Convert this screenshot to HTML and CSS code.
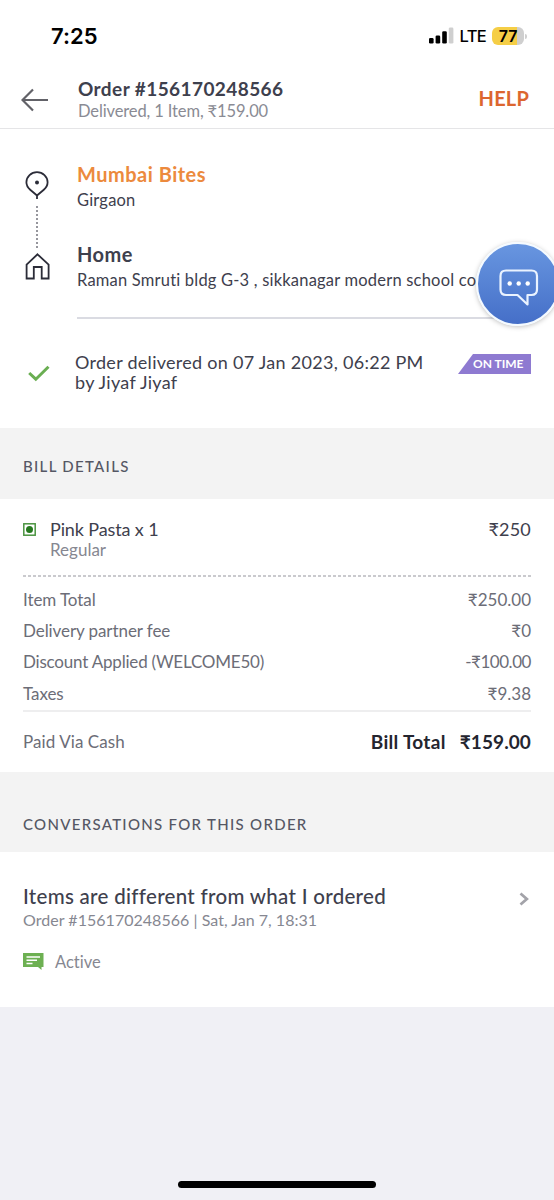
FILE: index.html
```html
<!DOCTYPE html>
<html lang="en">
<head>
<meta charset="utf-8">
<title>Order details</title>
<link rel="stylesheet" href="styles.css">
</head>
<body>
<div class="screen">
  <div class="status">
    <span class="clock">7:25</span>
    <div class="status-right">
      <svg class="signal" width="25" height="17" viewBox="0 0 25 17"><rect x="0" y="11" width="4.6" height="5.5" rx="1.3"/><rect x="6.6" y="8.500" width="4.6" height="8" rx="1.3"/><rect x="13.2" y="4.3" width="4.6" height="12.2" rx="1.3"/><rect x="19.8" y="0.5" width="4.6" height="16" rx="1.3" fill="#cfcfcf"/></svg>
      <span class="lte">LTE</span>
      <span class="battery"><span>77</span></span><span class="battery-tip"></span>
    </div>
  </div>
  <header class="header">
    <svg class="back" width="28" height="24" viewBox="0 0 28 24"><path d="M12 1.5 1.5 12 12 22.5M1.5 12H27" fill="none" stroke="#626268" stroke-width="2.2"/></svg>
    <div class="header-text">
      <h1 class="order-no">Order #156170248566</h1>
      <p class="order-sub">Delivered, 1 Item, ₹159.00</p>
    </div>
    <span class="help">HELP</span>
  </header>

  <section class="route">
    <div class="track">
      <svg class="pin" width="24" height="29" viewBox="0 0 24 29"><path d="M12 24.5 5.2 18.8C3 16.9 1.4 14.5 1.4 11.3A10.6 10.2 0 0 1 12 1.2 10.6 10.2 0 0 1 22.6 11.3C22.6 14.5 21 16.9 18.8 18.8ZM12 24V28" fill="none" stroke="#2b2c38" stroke-width="1.8"/><circle cx="12" cy="11.5" r="2" fill="#2b2c38"/></svg>
      <span class="dots"></span>
      <svg class="house" width="25" height="27" viewBox="0 0 25 27"><path d="M12.5 1.3 23.6 11.6V25.5H16.7V14H8.8V25.5H1.6V11.6Z" fill="none" stroke="#2b2c38" stroke-width="1.8"/></svg>
    </div>
    <div class="stops">
      <h2 class="place place-from">Mumbai Bites</h2>
      <p class="address">Girgaon</p>
      <h2 class="place place-home">Home</h2>
      <p class="address address-home">Raman Smruti bldg G-3 , sikkanagar modern school co</p>
    </div>
    <div class="chat">
      <svg width="40" height="38" viewBox="0 0 40 38"><path d="M7 1.5H32.500Q38 1.500 38 7V20.500Q38 26 32.500 26H28.500V35.500L18.500 26H7Q1.500 26 1.500 20.500V7Q1.500 1.500 7 1.500Z" fill="none" stroke="#eaf3ff" stroke-width="2.200" stroke-linejoin="round"/><g fill="#fff"><circle cx="10.700" cy="14.500" r="2.200"/><circle cx="19.700" cy="14.500" r="2.200"/><circle cx="28.700" cy="14.500" r="2.200"/></g></svg>
    </div>
  </section>
  <section class="delivered">
    <svg class="check" width="22" height="17" viewBox="0 0 22 17"><path d="M1.200 8 7.800 14.200 20.500 1.800" fill="none" stroke="#6aae52" stroke-width="3"/></svg>
    <p class="delivered-text">Order delivered on 07 Jan 2023, 06:22 PM<br>by Jiyaf Jiyaf</p>
    <span class="badge">ON TIME</span>
  </section>

  <h3 class="band band-bill">BILL DETAILS</h3>
  <section class="bill">
    <div class="item">
      <svg class="veg" width="13" height="13" viewBox="0 0 13 13"><rect x=".8" y=".8" width="11.4" height="11.4" fill="#fff" stroke="#4b9440" stroke-width="1.500"/><circle cx="6.500" cy="6.500" r="3.500" fill="#26791f"/></svg>
      <div class="item-text"><p class="item-name">Pink Pasta x 1</p><p class="item-size">Regular</p></div>
      <span class="item-price">₹250</span>
    </div>
    <div class="dash"></div>
    <div class="row"><span>Item Total</span><span class="amount">₹250.00</span></div>
    <div class="row"><span>Delivery partner fee</span><span class="amount">₹0</span></div>
    <div class="row"><span class="coupon">Discount Applied (WELCOME50)</span><span class="amount discount">-₹100.00</span></div>
    <div class="row"><span>Taxes</span><span class="amount">₹9.38</span></div>
    <div class="total"><span class="paid">Paid Via Cash</span><span class="total-label">Bill Total</span><span class="total-sum">₹159.00</span></div>
  </section>

  <h3 class="band band-conv">CONVERSATIONS FOR THIS ORDER</h3>
  <section class="conv">
    <div class="conv-head">
      <h4 class="conv-title">Items are different from what I ordered</h4>
      <svg class="chevron" width="10" height="14" viewBox="0 0 10 14"><path d="M1.500 1.500 7.800 7 1.500 12.500" fill="none" stroke="#a3a3a9" stroke-width="2.800"/></svg>
    </div>
    <p class="conv-sub">Order #156170248566 | Sat, Jan 7, 18:31</p>
    <div class="active">
      <svg width="21" height="18" viewBox="0 0 21 18"><path d="M0 0H20.500V14H18.500V17L15 14H0Z" fill="#6db052"/><path d="M3.500 4H17M3.500 7.300H14M3.500 10.500H9.500" stroke="#fff" stroke-width="1.400"/></svg>
      <span class="active-label">Active</span>
    </div>
  </section>
  <div class="home-bar"></div>
</div>
</body>
</html>
```

FILE: styles.css
```css
* { box-sizing: border-box; }
body { margin: 0; background: #f0f0f5; }
h1, h2, h3, h4, p { margin: 0; font-weight: 400; }
svg { display: block; flex: none; }
.screen { width: 554px; height: 1200px; overflow: hidden; display: flex; flex-direction: column; font-family: Lato, "Noto Sans", sans-serif; font-variant-ligatures: none; white-space: nowrap; background: #f0f0f5; color: #3e404d; }
.status { height: 72px; flex: none; background: #fff; display: flex; justify-content: space-between; padding: 24px 27px 0 51px; font-family: Inter, sans-serif; color: #000; }
.clock { font-size: 22px; line-height: 24px; font-weight: 600; }
.status-right { display: flex; height: 24px; align-items: center; }
.signal { margin-top: -1px; }
.lte { font-size: 16.5px; font-weight: 500; margin: 0 6px 0 6px; letter-spacing: -.7px; }
.battery { width: 32px; height: 18px; border-radius: 6px; margin-top: -1px; background: linear-gradient(90deg, #f5ce46 77%, #cfcfcf 77%); font-size: 16px; font-weight: 600; line-height: 18px; text-align: center; }
.battery-tip { width: 2px; height: 5px; margin-left: 1px; border-radius: 0 2px 2px 0; background: #cfcfcf; }
.header { height: 57px; flex: none; background: #fff; border-bottom: 1px solid #e5e5e7; display: flex; padding: 0 25px 0 21px; }
.back { margin-top: 16px; }
.header-text { margin-left: 29px; padding-top: 5px; flex: 1; }
.order-no { font-size: 19px; line-height: 23px; font-weight: 700; letter-spacing: .42px; }
.order-sub { font-size: 16.5px; line-height: 22px; letter-spacing: -.12px; color: #8a8b94; }
.help { font-size: 20px; line-height: 53px; font-weight: 700; letter-spacing: .2px; color: #dc662f; }
.route { height: 190px; flex: none; background: #fff; display: flex; position: relative; padding: 0 23px 0 25px; }
.track { width: 25px; padding-top: 42px; display: flex; flex-direction: column; align-items: center; }
.pin, .dots { margin-right: 1px; }
.dots { width: 2px; height: 44px; margin-top: 6px; margin-bottom: 3px; background: repeating-linear-gradient(#96969d 0 2px, transparent 2px 4px); }
.stops { margin-left: 27px; padding-top: 32px; flex: 1; border-bottom: 2px solid #dadbe2; }
.place { font-size: 20px; line-height: 26px; font-weight: 700; letter-spacing: .5px; }
.place-from { color: #ec8a3d; }
.place-home { margin-top: 30px; }
.address { font-size: 16.5px; line-height: 22px; padding-top: 2px; letter-spacing: .2px; }
.chat { position: absolute; left: 476px; top: 113px; width: 84px; height: 84px; border-radius: 50%; border: 2px solid #f4faff; background: linear-gradient(#6896e0, #456fc8); box-shadow: 0 1px 5px rgba(0,0,0,.25); padding: 25px 0 0 21px; }
.delivered { height: 109px; flex: none; background: #fff; display: flex; padding-left: 28px; }
.check { margin-top: 46px; }
.delivered-text { margin-left: 25px; padding-top: 33px; font-size: 18px; line-height: 20px; letter-spacing: .28px; flex: 1; }
.badge { width: 73px; height: 20px; margin: 35px 23px 0 0; padding-left: 15px; background: #8e7ad1; clip-path: polygon(15px 0, 100% 0, 100% 100%, 0 100%); color: #fff; font-size: 12px; font-weight: 700; line-height: 20px; }
.band { flex: none; padding-left: 23px; background: #f3f3f3; font-size: 15px; font-weight: 500; letter-spacing: 1.3px; color: #555764; }
.band-bill { height: 71px; line-height: 76px; }
.band-conv { height: 80px; line-height: 105px; }
.bill { height: 273px; flex: none; background: #fff; padding: 0 23px; }
.item { display: flex; height: 76px; padding-top: 19px; }
.veg { margin-top: 5px; }
.item-text { flex: 1; margin-left: 14px; }
.item-name, .item-price { font-size: 18px; line-height: 22px; }
.item-name { letter-spacing: -.12px; }
.item-price { letter-spacing: .2px; }
.item-size { font-size: 17px; line-height: 20px; color: #868791; }
.dash { height: 2px; background: repeating-linear-gradient(90deg, #cacace 0 3px, transparent 3px 5px); margin-bottom: 7px; }
.row { display: flex; justify-content: space-between; height: 31.2px; line-height: 31px; font-size: 17px; letter-spacing: -.08px; color: #6c6d77; }
.coupon { letter-spacing: -.2px; }
.amount { letter-spacing: 0; }
.discount { letter-spacing: -.45px; }
.total { display: flex; border-top: 2px solid #eeeeef; height: 61px; margin-top: 1px; line-height: 59px; font-size: 17px; color: #6c6d77; }
.paid { flex: 1; letter-spacing: .08px; }
.total-label, .total-sum { color: #24252f; font-size: 19px; font-weight: 700; }
.total-label { letter-spacing: .3px; }
.total-sum { margin-left: 14px; letter-spacing: .1px; }
.conv { height: 155px; flex: none; background: #fff; padding: 30px 25px 0 23px; }
.conv-head { display: flex; justify-content: space-between; align-items: center; height: 27px; }
.conv-title { font-size: 20.5px; line-height: 26px; font-weight: 500; letter-spacing: .3px; }
.chevron { margin-top: 6px; }
.conv-sub { font-size: 16px; line-height: 22px; letter-spacing: .03px; color: #868791; }
.active { display: flex; height: 20px; margin-top: 21px; align-items: center; font-size: 16.5px; color: #868791; }
.active-label { margin-left: 11px; }
.home-bar { width: 198px; height: 7px; margin: 174px auto 0; border-radius: 4px; background: #000; }
```
